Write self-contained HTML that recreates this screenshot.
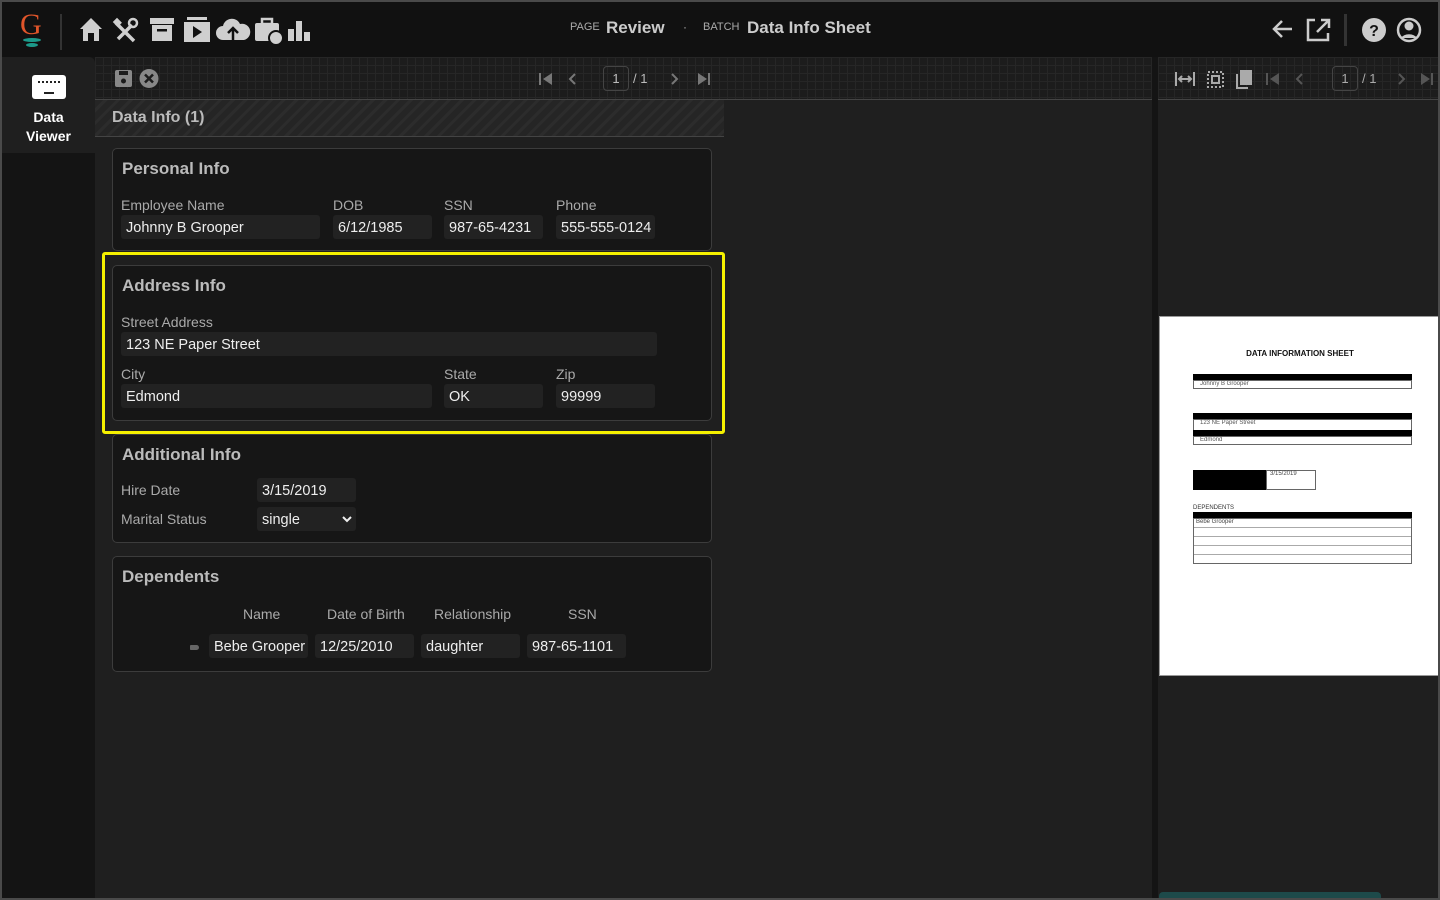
<!DOCTYPE html>
<html><head><meta charset="utf-8"><style>
*{box-sizing:border-box;margin:0;padding:0}
body{width:1440px;height:900px;background:#4a4a4a;font-family:"Liberation Sans","DejaVu Sans",sans-serif;overflow:hidden;position:relative;color:#ddd}
.a{position:absolute}
#frame{left:2px;top:2px;width:1436px;height:896px;background:#1f1f1f;overflow:hidden}
.grid{background-color:#1c1c1c;background-image:linear-gradient(#262626 1px,transparent 1px),linear-gradient(90deg,#262626 1px,transparent 1px);background-size:8px 8px}
.card{position:absolute;left:110px;width:600px;background:#161616;border:1px solid #3c3c3c;border-radius:5px}
.card h3{position:absolute;left:9px;top:10px;font-size:17px;color:#bbb;font-weight:bold}
.lbl{position:absolute;font-size:14px;color:#aaa}
.inp{position:absolute;height:24px;background:#222;border-radius:3px;font-size:14.5px;color:#eee;padding:5px 5px 0;white-space:nowrap;overflow:hidden}
.ic{fill:#cfcfcf}
</style></head><body>
<div id="frame" class="a">
<div class="a" style="left:0;top:0;width:1436px;height:55px;background:#111"></div>
<div class="a" style="left:18px;top:8px;font-family:'Liberation Serif',serif;font-size:30px;color:#e0552a;line-height:30px">G</div>
<div class="a" style="left:21px;top:36px;width:18px;height:4px;border-radius:50%;background:#1c9a8a"></div>
<div class="a" style="left:24px;top:41px;width:12px;height:4px;border-radius:50%;background:#1c9a8a"></div>
<div class="a" style="left:58px;top:12px;width:2px;height:36px;background:#333"></div>
<svg class="a" style="left:75px;top:12px" width="250" height="32" viewBox="0 0 250 32">
<path class="ic" d="M3 15 L14 4 L25 15 L22 15 L22 27 L17 27 L17 19 L11 19 L11 27 L6 27 L6 15Z"/>
<path d="M41 25 L55 11 M39 9 L57 27" stroke="#cfcfcf" stroke-width="3.5"/><circle cx="56" cy="9" r="4" fill="none" stroke="#cfcfcf" stroke-width="2.5"/><rect x="37" y="5" width="7" height="6" fill="#cfcfcf" transform="rotate(45 40 8)"/>
<rect class="ic" x="73" y="4" width="24" height="6"/><rect class="ic" x="75" y="11" width="20" height="16"/><rect x="80" y="15" width="10" height="2.5" fill="#111"/>
<rect class="ic" x="110" y="3" width="20" height="3"/><rect class="ic" x="107" y="8" width="26" height="20"/><path d="M116 12 L125 18 L116 24Z" fill="#111"/>
<path class="ic" d="M146 26 a7 7 0 0 1 0-14 a9 9 0 0 1 17-2 a7 7 0 0 1 4 16Z"/><path d="M156 26 V15 M151 19 L156 14 L161 19" stroke="#111" stroke-width="2.5" fill="none"/>
<rect class="ic" x="178" y="9" width="24" height="18" rx="2"/><rect x="185" y="5" width="10" height="5" fill="none" stroke="#cfcfcf" stroke-width="2.5"/><circle cx="199" cy="24" r="7" fill="#cfcfcf" stroke="#111" stroke-width="2"/>
<rect class="ic" x="211" y="15" width="6" height="12"/><rect class="ic" x="219" y="7" width="6" height="20"/><rect class="ic" x="227" y="18" width="6" height="9"/>
</svg>
<div class="a" style="left:568px;top:19px;font-size:11px;color:#aaa">PAGE</div>
<div class="a" style="left:604px;top:16px;font-size:17px;font-weight:bold;color:#ccc">Review</div>
<div class="a" style="left:681px;top:18px;font-size:12px;color:#aaa">·</div>
<div class="a" style="left:701px;top:19px;font-size:11px;color:#aaa">BATCH</div>
<div class="a" style="left:745px;top:16px;font-size:17px;font-weight:bold;color:#ccc">Data Info Sheet</div>
<svg class="a" style="left:1268px;top:10px" width="170" height="36" viewBox="0 0 170 36">
<path d="M22 17 H4 M12 9 L4 17 L12 25" stroke="#ccc" stroke-width="2.5" fill="none"/>
<path d="M45 8 H38 V28 H58 V21" stroke="#ccc" stroke-width="2.5" fill="none"/><path d="M47 20 L58 9 M51 8 H59 V16" stroke="#ccc" stroke-width="2.5" fill="none"/>
<rect x="74" y="2" width="3" height="32" fill="#333"/>
<circle cx="104" cy="18" r="12" fill="#ccc"/><text x="104" y="24" font-size="16" font-weight="bold" text-anchor="middle" fill="#111" font-family="Liberation Sans">?</text>
<circle cx="139" cy="18" r="11" fill="none" stroke="#ccc" stroke-width="2.5"/><circle cx="139" cy="14" r="4.5" fill="#ccc"/><path d="M131 26 a9 7 0 0 1 16 0" fill="#ccc"/>
</svg>
<div class="a" style="left:0;top:55px;width:93px;height:841px;background:#141414"></div>
<div class="a" style="left:0;top:55px;width:93px;height:96px;background:#1f1f1f;border-radius:0 6px 0 0"></div>
<div class="a" style="left:30px;top:73px;width:34px;height:24px;background:#fff;border-radius:3px"></div>
<div class="a" style="left:36px;top:79px;width:22px;height:5px;border-top:2px dotted #222"></div>
<div class="a" style="left:42px;top:90px;width:10px;height:2px;background:#222"></div>
<div class="a" style="left:0;top:106px;width:93px;text-align:center;font-size:14px;font-weight:bold;color:#fff;line-height:19px">Data<br>Viewer</div>
<div class="a grid" style="left:93px;top:55px;width:1057px;height:43px"></div>
<div class="a" style="left:93px;top:97px;width:1057px;height:1px;background:#444"></div>
<svg class="a" style="left:112px;top:66px" width="48" height="22"><rect x="1" y="2" width="17" height="17" rx="2" fill="#888"/><rect x="5" y="3" width="9" height="4" fill="#1c1c1c"/><circle cx="9.5" cy="13" r="2.5" fill="#1c1c1c"/><circle cx="35" cy="10.5" r="9.5" fill="#888"/><path d="M31 6.5 L39 14.5 M39 6.5 L31 14.5" stroke="#1c1c1c" stroke-width="2.5"/></svg>
<svg class="a" style="left:536px;top:68px" width="40" height="20"><rect x="1" y="3" width="2" height="12" fill="#777"/><path d="M14 3 L5 9 L14 15Z" fill="#777"/><path d="M37 4 L32 9 L37 14" stroke="#777" stroke-width="2" fill="none"/></svg>
<div class="a" style="left:601px;top:64px;width:26px;height:25px;border:1px solid #444;border-radius:4px;font-size:13px;color:#bbb;text-align:center;line-height:23px">1</div>
<div class="a" style="left:631px;top:69px;font-size:13px;color:#bbb">/ 1</div>
<svg class="a" style="left:667px;top:68px" width="44" height="20"><path d="M3 4 L8 9 L3 14" stroke="#777" stroke-width="2" fill="none"/><path d="M29 3 L38 9 L29 15Z" fill="#777"/><rect x="39" y="3" width="2" height="12" fill="#777"/></svg>
<div class="a" style="left:93px;top:98px;width:629px;height:37px;background:repeating-linear-gradient(135deg,#252525 0 6px,#2c2c2c 6px 9px);border-bottom:1px solid #444"></div>
<div class="a" style="left:110px;top:107px;font-size:16px;font-weight:bold;color:#bbb">Data Info (1)</div>
<div class="card" style="top:146px;height:103px"><h3>Personal Info</h3></div>
<div class="lbl" style="left:119px;top:195px">Employee Name</div><div class="inp" style="left:119px;top:213px;width:199px">Johnny B Grooper</div>
<div class="lbl" style="left:331px;top:195px">DOB</div><div class="inp" style="left:331px;top:213px;width:99px">6/12/1985</div>
<div class="lbl" style="left:442px;top:195px">SSN</div><div class="inp" style="left:442px;top:213px;width:99px">987-65-4231</div>
<div class="lbl" style="left:554px;top:195px">Phone</div><div class="inp" style="left:554px;top:213px;width:99px">555-555-0124</div>
<div class="a" style="left:100px;top:250px;width:623px;height:182px;border:3px solid #f5f000;border-radius:3px"></div>
<div class="card" style="top:263px;height:156px"><h3>Address Info</h3></div>
<div class="lbl" style="left:119px;top:312px">Street Address</div><div class="inp" style="left:119px;top:330px;width:536px">123 NE Paper Street</div>
<div class="lbl" style="left:119px;top:364px">City</div><div class="inp" style="left:119px;top:382px;width:311px">Edmond</div>
<div class="lbl" style="left:442px;top:364px">State</div><div class="inp" style="left:442px;top:382px;width:99px">OK</div>
<div class="lbl" style="left:554px;top:364px">Zip</div><div class="inp" style="left:554px;top:382px;width:99px">99999</div>
<div class="card" style="top:432px;height:109px"><h3>Additional Info</h3></div>
<div class="lbl" style="left:119px;top:480px">Hire Date</div><div class="inp" style="left:255px;top:476px;width:99px">3/15/2019</div>
<div class="lbl" style="left:119px;top:509px">Marital Status</div><div class="inp" style="left:255px;top:505px;width:99px">single</div>
<svg class="a" style="left:340px;top:514px" width="10" height="7"><path d="M1 1 L5 5 L9 1" stroke="#eee" stroke-width="2" fill="none"/></svg>
<div class="card" style="top:554px;height:116px"><h3>Dependents</h3></div>
<div class="lbl" style="left:241px;top:604px">Name</div>
<div class="lbl" style="left:325px;top:604px">Date of Birth</div>
<div class="lbl" style="left:432px;top:604px">Relationship</div>
<div class="lbl" style="left:566px;top:604px">SSN</div>
<div class="a" style="left:188px;top:643px;width:9px;height:5px;background:#666;border-radius:1px 3px 3px 1px"></div>
<div class="inp" style="left:207px;top:632px;width:99px">Bebe Grooper</div>
<div class="inp" style="left:313px;top:632px;width:99px">12/25/2010</div>
<div class="inp" style="left:419px;top:632px;width:99px">daughter</div>
<div class="inp" style="left:525px;top:632px;width:99px">987-65-1101</div>
<div class="a" style="left:1150px;top:55px;width:6px;height:841px;background:#141414"></div>
<div class="a" style="left:1156px;top:55px;width:280px;height:841px;background:#1f1f1f"></div>
<div class="a grid" style="left:1156px;top:55px;width:280px;height:43px;border-bottom:1px solid #444"></div>
<svg class="a" style="left:1172px;top:66px" width="90" height="24"><path d="M2 4 V18 M20 4 V18 M5 11 H17 M8 8 L5 11 L8 14 M14 8 L17 11 L14 14" stroke="#aaa" stroke-width="2" fill="none"/><rect x="34" y="4" width="15" height="15" fill="none" stroke="#aaa" stroke-width="2" stroke-dasharray="2 2"/><rect x="38" y="8" width="7" height="7" fill="none" stroke="#aaa" stroke-width="2"/><rect x="66" y="2" width="12" height="15" fill="#aaa"/><path d="M63 6 V20 H74" stroke="#aaa" stroke-width="2" fill="none"/></svg>
<svg class="a" style="left:1263px;top:68px" width="40" height="20"><rect x="1" y="3" width="2" height="12" fill="#555"/><path d="M14 3 L5 9 L14 15Z" fill="#555"/><path d="M37 4 L32 9 L37 14" stroke="#555" stroke-width="2" fill="none"/></svg>
<div class="a" style="left:1330px;top:64px;width:26px;height:25px;border:1px solid #444;border-radius:4px;font-size:13px;color:#aaa;text-align:center;line-height:23px">1</div>
<div class="a" style="left:1360px;top:69px;font-size:13px;color:#aaa">/ 1</div>
<svg class="a" style="left:1394px;top:68px" width="44" height="20"><path d="M3 4 L8 9 L3 14" stroke="#555" stroke-width="2" fill="none"/><path d="M25 3 L34 9 L25 15Z" fill="#555"/><rect x="35" y="3" width="2" height="12" fill="#555"/></svg>
<div class="a" style="left:1157px;top:314px;width:281px;height:360px;background:#fff;border:1px solid #999"></div>
<div class="a" style="left:1157px;top:347px;width:282px;text-align:center;font-size:8px;font-weight:bold;color:#111">DATA INFORMATION SHEET</div>
<div class="a" style="left:1191px;top:372px;width:219px;height:6px;background:#000"></div>
<div class="a" style="left:1191px;top:378px;width:219px;height:9px;border:1px solid #666;font-size:6px;color:#555;padding-left:6px">Johnny B Grooper</div>
<div class="a" style="left:1191px;top:411px;width:219px;height:6px;background:#000"></div>
<div class="a" style="left:1191px;top:417px;width:219px;height:13px;border:1px solid #666;font-size:6px;color:#555;padding-left:6px">123 NE Paper Street</div>
<div class="a" style="left:1191px;top:428px;width:219px;height:6px;background:#000"></div>
<div class="a" style="left:1191px;top:434px;width:219px;height:9px;border:1px solid #666;font-size:6px;color:#555;padding-left:6px">Edmond</div>
<div class="a" style="left:1191px;top:468px;width:73px;height:20px;background:#000"></div>
<div class="a" style="left:1264px;top:468px;width:50px;height:20px;border:1px solid #666;font-size:6px;color:#444;padding-left:3px">3/15/2019</div>
<div class="a" style="left:1191px;top:503px;font-size:6px;color:#333">DEPENDENTS</div>
<div class="a" style="left:1191px;top:510px;width:219px;height:6px;background:#000"></div>
<div class="a" style="left:1191px;top:516px;width:219px;height:46px;border:1px solid #666;background:repeating-linear-gradient(#fff 0 8px,#aaa 8px 9px);font-size:6px;color:#444;padding-left:2px">Bebe Grooper</div>
<div class="a" style="left:1157px;top:890px;width:222px;height:6px;background:#1d4a4a;border-radius:4px 4px 0 0"></div>
</div>
</body></html>
